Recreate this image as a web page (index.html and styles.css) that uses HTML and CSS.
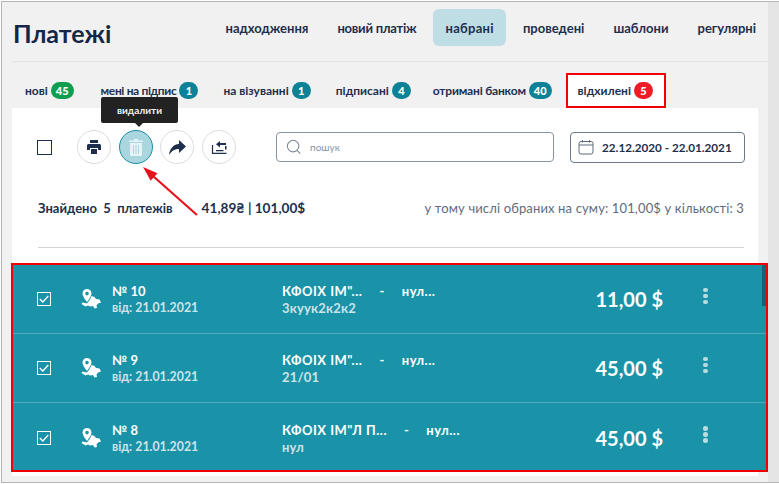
FILE: index.html
```html
<!DOCTYPE html>
<html lang="uk">
<head>
  <meta charset="UTF-8" />
  <title>Платежі</title>
  <link rel="stylesheet" href="styles.css">
</head>
<body>
  <div class="page">
    <header class="top">
      <h1 class="title">Платежі</h1>
      <nav class="nav">
        <a class="nav-item">надходження</a>
        <a class="nav-item nav-tight">новий платіж</a>
        <a class="nav-item active">набрані</a>
        <a class="nav-item">проведені</a>
        <a class="nav-item">шаблони</a>
        <a class="nav-item">регулярні</a>
      </nav>
    </header>

    <div class="tabs">
      <span class="tab">нові <b class="badge green">45</b></span>
      <span class="tab tab-tight">мені на підпис <b class="badge">1</b></span>
      <span class="tab">на візуванні <b class="badge">1</b></span>
      <span class="tab">підписані <b class="badge">4</b></span>
      <span class="tab tab-tight2">отримані банком <b class="badge">40</b></span>
      <span class="tab tab-marked">відхилені <b class="badge red">5</b></span>
    </div>

    <main class="panel">
      <div class="tools">
        <span class="check"></span>
        <div class="round-btns">
          <span class="round">
            <svg width="16" height="16" viewBox="0 0 16 16"><path fill="#1d2f4d" d="M4 1h8v3H4zM2.500 5h11A1.500 1.500 0 0 1 15 6.500V11h-3V9H4v2H1V6.500A1.500 1.500 0 0 1 2.500 5zM5 10h6v5H5z"/></svg>
          </span>
          <span class="round selected">
            <svg width="14" height="17" viewBox="0 0 14 17"><path fill="#e4f3f6" d="M5 0h4v1.500h5V3H0V1.500h5zM1 4h12v11.500a1.500 1.500 0 0 1-1.500 1.500h-9A1.500 1.500 0 0 1 1 15.500z"/><path stroke="#a9d6df" d="M4.500 6v9M7 6v9M9.500 6v9"/></svg>
          </span>
          <span class="round">
            <svg width="17" height="15" viewBox="0 0 17 15"><path fill="#1d2f4d" d="M10 0l7 6.500L10 13V9C6 9 3 10.500 0 15 .8 9 4 4.500 10 4z"/></svg>
          </span>
          <span class="round">
            <svg width="16" height="13" viewBox="0 0 16 13"><path fill="none" stroke="#1d2f4d" stroke-width="1.200" d="M1.500 4v8.400h14"/><path fill="#1d2f4d" d="M9 0v2h6v2H9v2.500L5 3.200zM5 9h7.500v1.300H5zM14 5h1.500v3.500H14z"/></svg>
          </span>
        </div>
        <div class="search">
          <svg width="16" height="16" viewBox="0 0 18 18"><circle cx="8" cy="8" r="6.500" fill="none" stroke="#7d8797" stroke-width="1.200"/><path d="M12.500 12.800l3.500 3.700" stroke="#7d8797" stroke-width="1.200"/></svg>
          <span>пошук</span>
        </div>
        <div class="dates">
          <svg width="16" height="16" viewBox="0 0 16 16"><rect x="1" y="2.500" width="14" height="12.500" rx="2" fill="none" stroke="#5f6b7e"/><path d="M1 6h14M4.500 1v2.500M11.500 1v2.500" stroke="#5f6b7e"/></svg>
          <span>22.12.2020 - 22.01.2021</span>
        </div>
      </div>

      <div class="summary">
        <span class="found">Знайдено&nbsp; 5&nbsp; платежів</span>
        <span class="sum">41,89₴ | 101,00$</span>
        <span class="selected-sum">у тому числі обраних на суму: 101,00$ у кількості: 3</span>
      </div>
      <div class="rule"></div>
    </main>

    <section class="list">
      <div class="row">
        <span class="row-check"><svg width="10" height="8" viewBox="0 0 10 8"><path d="M.8 4l3 3L9.300 1" fill="none" stroke="#fff" stroke-width="1.300"/></svg></span>
        <svg class="geo" width="20" height="20" viewBox="0 0 20 20"><path fill="#fff" fill-rule="evenodd" d="M6 0a4.500 4.500 0 0 1 4.500 4.500C10.500 7.500 6 13 6 13S1.500 7.500 1.500 4.500A4.500 4.500 0 0 1 6 0zm0 2.800a1.800 1.800 0 1 0 0 3.600 1.800 1.800 0 0 0 0-3.600z"/><path fill="#fff" d="M10.500 7l3 1 1.500 2 3.500.5 1.500 3-3 1-1.500 2 .5 2.500-2.500.5-1.500-2.500-3 .5-2-1-2.500 1L.500 15l1-1.500 4.500 1 3-4z"/></svg>
        <div class="doc"><div class="num">№ 10</div><div class="date">від: 21.01.2021</div></div>
        <div class="who"><div class="names"><span>КФОІХ ІМ"...</span><span>-</span><span>нул...</span></div><div class="note">3кyyк2к2к2</div></div>
        <div class="amount">11,00 $</div>
        <div class="dots"><i></i><i></i><i></i></div>
      </div>
      <div class="row">
        <span class="row-check"><svg width="10" height="8" viewBox="0 0 10 8"><path d="M.8 4l3 3L9.300 1" fill="none" stroke="#fff" stroke-width="1.300"/></svg></span>
        <svg class="geo" width="20" height="20" viewBox="0 0 20 20"><path fill="#fff" fill-rule="evenodd" d="M6 0a4.500 4.500 0 0 1 4.500 4.500C10.500 7.500 6 13 6 13S1.500 7.500 1.500 4.500A4.500 4.500 0 0 1 6 0zm0 2.800a1.800 1.800 0 1 0 0 3.600 1.800 1.800 0 0 0 0-3.600z"/><path fill="#fff" d="M10.500 7l3 1 1.500 2 3.500.5 1.500 3-3 1-1.500 2 .5 2.500-2.500.5-1.500-2.500-3 .5-2-1-2.500 1L.500 15l1-1.500 4.500 1 3-4z"/></svg>
        <div class="doc"><div class="num">№ 9</div><div class="date">від: 21.01.2021</div></div>
        <div class="who"><div class="names"><span>КФОІХ ІМ"...</span><span>-</span><span>нул...</span></div><div class="note">21/01</div></div>
        <div class="amount">45,00 $</div>
        <div class="dots"><i></i><i></i><i></i></div>
      </div>
      <div class="row">
        <span class="row-check"><svg width="10" height="8" viewBox="0 0 10 8"><path d="M.8 4l3 3L9.300 1" fill="none" stroke="#fff" stroke-width="1.300"/></svg></span>
        <svg class="geo" width="20" height="20" viewBox="0 0 20 20"><path fill="#fff" fill-rule="evenodd" d="M6 0a4.500 4.500 0 0 1 4.500 4.500C10.500 7.500 6 13 6 13S1.500 7.500 1.500 4.500A4.500 4.500 0 0 1 6 0zm0 2.800a1.800 1.800 0 1 0 0 3.600 1.800 1.800 0 0 0 0-3.600z"/><path fill="#fff" d="M10.500 7l3 1 1.500 2 3.500.5 1.500 3-3 1-1.500 2 .5 2.500-2.500.5-1.500-2.500-3 .5-2-1-2.500 1L.500 15l1-1.500 4.500 1 3-4z"/></svg>
        <div class="doc"><div class="num">№ 8</div><div class="date">від: 21.01.2021</div></div>
        <div class="who"><div class="names"><span>КФОІХ ІМ"Л П...</span><span>-</span><span>нул...</span></div><div class="note">нул</div></div>
        <div class="amount">45,00 $</div>
        <div class="dots"><i></i><i></i><i></i></div>
      </div>
      <span class="thumb"></span>
    </section>

    <!-- tooltip and arrow drawn over the page -->
    <div class="tooltip">видалити</div>
    <svg class="arrow" width="56" height="50" viewBox="0 0 56 50"><path d="M10 9L54 48" stroke="#e8121c" stroke-width="2.200"/><path fill="#e8121c" d="M0 0l14.500 6.300L7.700 13.700z"/></svg>
  </div>
</body>
</html>
```
FILE: styles.css
```css
* {
  box-sizing: border-box;
}

body {
  margin: 0;
  width: 779px;
  height: 484px;
  overflow: hidden;
  font-family: Lato, "Noto Sans", sans-serif;
  color: #1d2f4d;
  background: #fff;
}

.page {
  position: relative;
  height: 482px;
  margin: 1px 0 0 1px;
  border-top: 1px solid #b5b5b5;
  border-left: 1px solid #b5b5b5;
  border-bottom: 1px solid #b5b5b5;
  background: linear-gradient(to right, #f1f1f1 766px, #e5e5e5 766px);
}

.top {
  display: flex;
  justify-content: space-between;
  height: 60px;
  margin: 0 8px 0 11px;
  border-bottom: 1px solid #e2e2e2;
}

.title {
  margin: 14px 0 0;
  font-size: 25px;
  line-height: 34px;
  font-weight: 700;
  color: #14264a;
}

.nav {
  display: flex;
  align-items: flex-start;
  margin: 7px 3px 0 0;
}

.nav-item {
  height: 37px;
  padding: 0 12px;
  margin-left: 5px;
  font-size: 13px;
  line-height: 38px;
  font-weight: 700;
  border-radius: 6px;
}

.nav-tight {
  letter-spacing: -0.25px;
}

.nav-item.active {
  letter-spacing: 0.3px;
  background: #bfdde4;
}

.tabs {
  display: flex;
  align-items: center;
  height: 46px;
  padding: 11px 0 0 23px;
  gap: 25px;
}

.tab {
  display: flex;
  align-items: center;
  gap: 3px;
  font-size: 12px;
  font-weight: 700;
  white-space: nowrap;
}

.tab-tight {
  margin-left: 2px;
  letter-spacing: -0.35px;
}

.tab-tight2 {
  margin-left: -3px;
  letter-spacing: -0.2px;
}

.tab-marked {
  position: relative;
  z-index: 1;
  align-self: flex-end;
  height: 35px;
  margin-left: -11px;
  padding: 0 11px 0 10px;
  background: #fff;
  border: 2px solid #f00000;
}

.badge {
  min-width: 19px;
  height: 17px;
  padding: 0 5px;
  border-radius: 9px;
  font-size: 11px;
  letter-spacing: 0;
  line-height: 17px;
  text-align: center;
  color: #fff;
  background: #0d8296;
}

.badge.green {
  background: #0f9e50;
}

.badge.red {
  background: #ee1c25;
}

.panel {
  height: 368px;
  margin: 0 21px 0 10px;
  padding: 22px 14px 0 25px;
  background: #fff;
}

.tools {
  display: flex;
  align-items: center;
  height: 34px;
}

.check {
  flex-shrink: 0;
  width: 15px;
  height: 15px;
  border: 1.500px solid #1d2f4d;
}

.round-btns {
  display: flex;
  gap: 7.700px;
  margin-left: 25px;
}

.round {
  display: flex;
  align-items: center;
  justify-content: center;
  width: 34px;
  height: 34px;
  border: 1px solid #dcdcdc;
  border-radius: 50%;
}

.round.selected {
  background: #a9d6df;
  border-color: #1a8ea3;
}

.search {
  flex-shrink: 0;
  display: flex;
  align-items: center;
  gap: 8px;
  width: 278px;
  height: 30px;
  margin-left: 40px;
  padding-left: 9px;
  border: 1px solid #8a93a3;
  border-radius: 4px;
  font-size: 10px;
  color: #8a93a3;
}

.dates {
  flex-shrink: 0;
  display: flex;
  align-items: center;
  gap: 8px;
  width: 175px;
  height: 31px;
  margin-left: 16px;
  padding-left: 7px;
  border: 1px solid #6e7889;
  border-radius: 4px;
  font-size: 11.700px;
  font-weight: 700;
}

.summary {
  display: flex;
  align-items: center;
  margin-top: 34px;
  height: 20px;
  padding-left: 1px;
  font-size: 13px;
  font-weight: 700;
}

.sum {
  margin-left: 29px;
  font-size: 13.600px;
}

.selected-sum {
  margin-left: auto;
  font-weight: 400;
  color: #5f6b7e;
  letter-spacing: 0.14px;
}

.rule {
  height: 1px;
  margin-top: 29px;
  margin-left: 1px;
  background: #d4d4d4;
}

.list {
  position: absolute;
  left: 9px;
  top: 261px;
  width: 757px;
  height: 209px;
  border: 2px solid #f00000;
  background: #1a93a9;
  color: #fff;
}

.row {
  display: flex;
  align-items: center;
  height: 69px;
  padding-left: 24px;
  border-bottom: 1px solid #4fabbd;
}

.row:last-of-type {
  border-bottom: 0;
}

.row-check {
  flex-shrink: 0;
  display: flex;
  align-items: center;
  justify-content: center;
  width: 14px;
  height: 14px;
  border: 1px solid #fff;
}

.geo {
  flex-shrink: 0;
  margin-left: 30px;
}

.doc {
  flex-shrink: 0;
  width: 170px;
  margin-left: 11px;
}

.num {
  font-size: 13px;
  line-height: 18px;
  font-weight: 700;
}

.date {
  font-size: 12.300px;
  line-height: 16px;
  font-weight: 700;
  color: #cde3e8;
}

.who {
  flex-shrink: 0;
  width: 271px;
}

.names {
  display: flex;
  gap: 17px;
  font-size: 13px;
  line-height: 18px;
  font-weight: 700;
  letter-spacing: 0.5px;
}

.note {
  font-size: 13px;
  line-height: 16px;
  color: #cde3e8;
  font-weight: 700;
  letter-spacing: 0.2px;
}

.amount {
  flex-shrink: 0;
  width: 110px;
  font-size: 20px;
  font-weight: 700;
  text-align: right;
}

.dots {
  display: flex;
  flex-direction: column;
  gap: 1.500px;
  margin: -6px 0 0 40px;
}

.dots i {
  width: 4.500px;
  height: 4.500px;
  border-radius: 50%;
  background: #b9dce3;
}

.thumb {
  position: absolute;
  right: 0;
  top: 0;
  width: 4px;
  height: 41px;
  background: #13637a;
}

.tooltip {
  position: absolute;
  left: 99px;
  top: 95px;
  width: 77px;
  height: 26px;
  border-radius: 2px;
  background: #222;
  color: #f1f1f1;
  font-size: 10px;
  font-weight: 700;
  line-height: 27px;
  text-align: center;
}

.tooltip::after {
  content: "";
  position: absolute;
  left: 34px;
  top: 26px;
  border: 4px solid transparent;
  border-top-color: #222;
}

.arrow {
  position: absolute;
  left: 141px;
  top: 165px;
}
```
